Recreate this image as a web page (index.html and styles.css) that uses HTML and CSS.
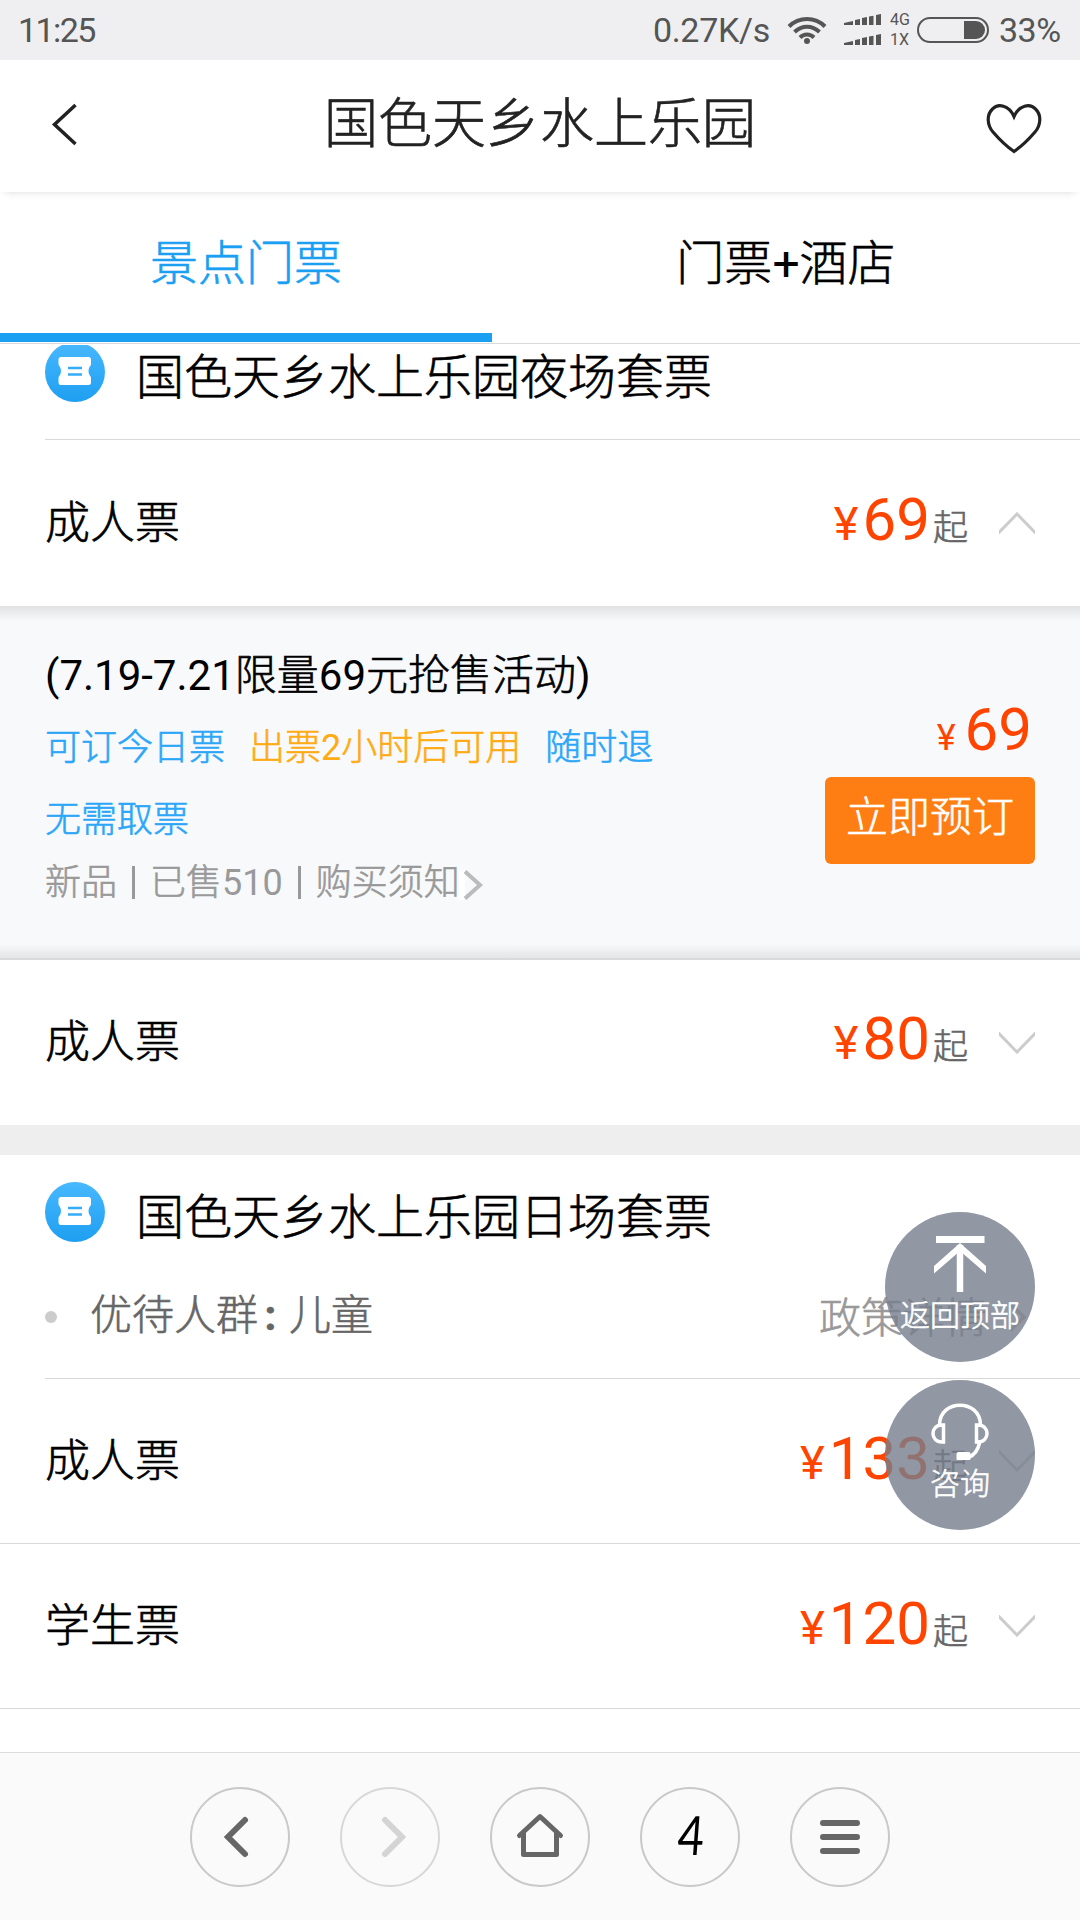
FILE: index.html
```html
<!DOCTYPE html>
<html lang="zh-CN">
<head>
<meta charset="utf-8">
<title>国色天乡水上乐园</title>
<link rel="stylesheet" href="styles.css">
</head>
<body>
<div class="screen">
  <div class="status">
    <span class="clock">11:25</span>
    <span class="speed">0.27K/s</span>
    <svg class="wifi" width="40" height="30" viewBox="0 0 40 30" fill="none" stroke="#555" stroke-width="4">
      <path d="M2 11.500C12 1.500 28 1.500 38 11.500"/>
      <path d="M7.500 17C15 10 25 10 32.500 17"/>
      <path d="M13 22.500C17 18.500 23 18.500 27 22.500"/>
      <circle cx="20" cy="26" r="3" fill="#555" stroke="none"/>
    </svg>
    <svg class="signal" width="38" height="32" viewBox="0 0 38 32" fill="#555">
      <path d="M0 9l9-2v4H0zM11 6l5-1v6h-5zM18 4l5-1v8h-5zM25 2.500l4.500-.7V11H25zM32 1l5-1v11h-5z"/>
      <path d="M0 29l9-2v4H0zM11 26l5-1v6h-5zM18 24l5-1v8h-5zM25 22.500l4.500-.7V31H25zM32 21l5-1v11h-5z"/>
    </svg>
    <span class="net"><span>4G</span><span>1X</span></span>
    <svg class="battery" width="72" height="26" viewBox="0 0 72 26">
      <rect x="1" y="1" width="70" height="24" rx="12" fill="none" stroke="#555" stroke-width="2"/>
      <path d="M47 4h12a9 9 0 0 1 0 18H47z" fill="#555"/>
    </svg>
    <span class="percent">33%</span>
  </div>

  <header class="header">
    <svg width="80" height="60" viewBox="0 0 80 60" fill="none" stroke="#222" stroke-width="3.500"><path d="M39.500 9L18.500 28.500L39.500 48"/></svg>
    <h1 class="title">国色天乡水上乐园</h1>
    <svg class="heart" width="80" height="60" viewBox="0 0 80 60" fill="none" stroke="#222" stroke-width="3.200"><path d="M42 20.500C37 9 26 7 20.500 13C14 19 15.500 30 21 36C27 43 34 50 42 55.500C50 50 57 43 63 36C68.500 30 70 19 63.500 13C58 7 47 9 42 20.500Z"/></svg>
  </header>

  <nav class="tabs">
    <div class="tab tab-active">景点门票</div>
    <div class="tab">门票<span class="num">+</span>酒店</div>
  </nav>

  <main class="list">
    <section class="group group-scrolled">
      <div class="group-head">
        <svg class="ticket" width="60" height="60" viewBox="0 0 60 60">
          <defs><linearGradient id="sky" x1="0" y1="0" x2="0" y2="1"><stop offset="0" stop-color="#48b8fe"/><stop offset="1" stop-color="#1e9ff1"/></linearGradient></defs>
          <circle cx="30" cy="30" r="30" fill="url(#sky)"/>
          <path fill="#fff" d="M16 15h27.500q2.500 0 2.500 2.500V22q0 1.500-1.500 3q-2 4 0 8q1.500 1.500 1.500 3v4.500q0 2.500-2.500 2.500H16q-2.500 0-2.500-2.500V36q0-1.500 1.500-3q2-4 0-8q-1.500-1.500-1.500-3v-4.500Q13.500 15 16 15z"/>
          <path d="M23 26h14M23 32.500h14" stroke="#35acf8" stroke-width="2.500"/>
        </svg>
        <h2 class="group-title">国色天乡水上乐园夜场套票</h2>
      </div>
      <div class="row row-open">
        <span class="kind">成人票</span>
        <span class="price"><i class="yen">¥</i><b class="amount">69</b><small class="from">起</small></span>
        <svg class="arrow" width="36" height="22" viewBox="0 0 36 22" fill="none" stroke="#ccc" stroke-width="3"><path d="M-1 21.500L18 2L37 21.500"/></svg>
      </div>
      <div class="offer">
        <div class="offer-info">
          <h3 class="offer-title">(7.19-7.21<span class="han">限量</span>69<span class="han">元抢售活动</span>)</h3>
          <div class="tags"><span>可订今日票</span><span class="tag-warn">出票<span class="num">2</span>小时后可用</span><span>随时退</span><span>无需取票</span></div>
          <div class="meta"><span>新品</span><i class="bar"></i><span>已售<span class="num">510</span></span><i class="bar"></i><span>购买须知</span><svg class="more" width="24" height="30" viewBox="0 0 24 30"><path fill="#fff" d="M0 0h6v30H0z"/><path d="M6 1.500L21 15L6 28.500" fill="none" stroke="#bbb" stroke-width="4"/></svg></div>
        </div>
        <div class="offer-buy">
          <span class="price"><i class="yen yen-small">¥</i><b class="amount">69</b></span>
          <button class="book">立即预订</button>
        </div>
      </div>
      <div class="row">
        <span class="kind">成人票</span>
        <span class="price"><i class="yen">¥</i><b class="amount">80</b><small class="from">起</small></span>
        <svg class="arrow" width="36" height="22" viewBox="0 0 36 22" fill="none" stroke="#ccc" stroke-width="3"><path d="M-1 .5L18 20L37 .5"/></svg>
      </div>
    </section>

    <section class="group">
      <div class="group-head">
        <svg class="ticket" width="60" height="60" viewBox="0 0 60 60">
          <circle cx="30" cy="30" r="30" fill="url(#sky)"/>
          <path fill="#fff" d="M16 15h27.500q2.500 0 2.500 2.500V22q0 1.500-1.500 3q-2 4 0 8q1.500 1.500 1.500 3v4.500q0 2.500-2.500 2.500H16q-2.500 0-2.500-2.500V36q0-1.500 1.500-3q2-4 0-8q-1.500-1.500-1.500-3v-4.500Q13.500 15 16 15z"/>
          <path d="M23 26h14M23 32.500h14" stroke="#35acf8" stroke-width="2.500"/>
        </svg>
        <h2 class="group-title">国色天乡水上乐园日场套票</h2>
      </div>
      <div class="policy">
        <i class="dot"></i>
        <span class="who">优待人群<span class="colon">:</span>儿童</span>
        <span class="detail">政策详情</span>
        <svg width="18" height="30" viewBox="0 0 18 30" fill="none" stroke="#bbb" stroke-width="3.500"><path d="M1 1.500L15 15L1 28.500"/></svg>
      </div>
      <div class="row row-first">
        <span class="kind">成人票</span>
        <span class="price"><i class="yen">¥</i><b class="amount">133</b><small class="from">起</small></span>
        <svg class="arrow" width="36" height="22" viewBox="0 0 36 22" fill="none" stroke="#ccc" stroke-width="3"><path d="M-1 .5L18 20L37 .5"/></svg>
      </div>
      <div class="row">
        <span class="kind">学生票</span>
        <span class="price"><i class="yen">¥</i><b class="amount">120</b><small class="from">起</small></span>
        <svg class="arrow" width="36" height="22" viewBox="0 0 36 22" fill="none" stroke="#ccc" stroke-width="3"><path d="M-1 .5L18 20L37 .5"/></svg>
      </div>
      <div class="row"></div>
    </section>
  </main>

  <div class="floats">
    <div class="float">
      <svg width="60" height="60" viewBox="0 0 60 60" fill="none" stroke="#fff"><path d="M6 7.500h48.500" stroke-width="7"/><path d="M30 13v47" stroke-width="6.500"/><path d="M4 41.500V34L30 11L56 34V41.500L30 19Z" fill="#fff" stroke="none"/></svg>
      <span>返回顶部</span>
    </div>
    <div class="float">
      <svg width="60" height="60" viewBox="0 0 60 60" fill="none" stroke="#fff" stroke-width="3.500"><path d="M9.500 25C9.500-1.500 50.500-1.500 50.500 25M13.500 25v17h-1.500C0 42 0 25 12 25ZM46.500 25v17h1.500C60 42 60 25 48 25ZM49.500 43Q47 54 39 57"/><rect x="26.500" y="52" width="14" height="8.500" rx="2" fill="#fff" stroke="none"/></svg>
      <span>咨询</span>
    </div>
  </div>

  <footer class="toolbar">
    <div class="tool"><svg viewBox="0 0 100 100" fill="none" stroke="#666" stroke-width="6" stroke-linecap="round"><path d="M55 33L38 50L55 67"/></svg></div>
    <div class="tool tool-off"><svg viewBox="0 0 100 100" fill="none" stroke="#d4d4d4" stroke-width="6" stroke-linecap="round"><path d="M45 33L62 50L45 67"/></svg></div>
    <div class="tool"><svg viewBox="0 0 100 100" fill="none" stroke="#666" stroke-width="5" stroke-linecap="round" stroke-linejoin="round"><path d="M29.500 48.500L50 29.500L70.500 48.500M33.500 46V67.500H66.500V46"/></svg></div>
    <div class="tool"><span class="windows">4</span></div>
    <div class="tool"><svg viewBox="0 0 100 100" fill="none" stroke="#666" stroke-width="6" stroke-linecap="round"><path d="M33 36H67M33 50H67M33 64H67"/></svg></div>
  </footer>
</div>
</body>
</html>
```
FILE: styles.css
```css
* { box-sizing: border-box; margin: 0; padding: 0; }
i, b, small, h1, h2, h3 { font-style: normal; font-weight: inherit; }
svg { display: block; flex: none; }
body {
  width: 1080px;
  height: 1920px;
  overflow: hidden;
  background: #fff;
  color: #000;
  font-family: Roboto, "Noto Sans CJK SC", sans-serif;
  font-weight: 400;
  white-space: nowrap;
}
.screen { position: relative; display: flex; flex-direction: column; width: 1080px; height: 1920px; }
.title, .tab, .group-title, .kind, .from, .han, .tags, .meta, .book, .policy, .float {
  font-weight: 300;
  -webkit-text-stroke: .6px currentColor;
}
.num { font-weight: 400; -webkit-text-stroke: 0; }

.status {
  display: flex;
  flex: none;
  align-items: center;
  height: 60px;
  padding: 0 17px 0 18px;
  background: #efeff1;
  color: #555;
  font-size: 34px;
  line-height: 60px;
}
.clock { letter-spacing: -1.6px; }
.speed { margin-left: auto; letter-spacing: -.3px; }
.wifi { margin-left: 17px; }
.signal { margin-left: 17px; }
.net { display: flex; flex-direction: column; width: 27px; margin-left: 8px; font-size: 16px; line-height: 20px; }
.battery { width: 72px; }
.percent { width: 64px; margin-left: 10px; letter-spacing: -.5px; }

.header {
  position: relative;
  display: grid;
  flex: none;
  grid-template-columns: 1fr auto 1fr;
  align-items: center;
  height: 132px;
  padding: 0 28px 0 36px;
  background: #fff;
  box-shadow: 0 5px 8px -5px rgba(0, 0, 0, .15);
  color: #222;
}
.title { margin: 0 0 3px -8px; font-size: 54px; line-height: 60px; }
.heart { justify-self: end; }

.tabs { display: grid; flex: none; grid-template-columns: 492px 1fr; height: 152px; border-bottom: 1px solid #d9d9d9; }
.tab { padding-top: 42px; font-size: 48px; line-height: 60px; text-align: center; }
.tab-active { height: 150px; border-bottom: 9px solid #1b9ff2; color: #1b9ff2; }

.list { flex: 1; min-height: 0; overflow: hidden; border-top: 1px solid #fff; }
.group + .group { border-top: 30px solid #eee; }
.group-scrolled { margin-top: -30px; }
.group-head { display: flex; align-items: center; height: 114px; padding: 0 0 0 45px; }
.group-scrolled .group-head { height: 124px; padding-bottom: 10px; }
.group-title { margin: 12px 0 0 31px; font-size: 48px; line-height: 60px; }
.row {
  display: flex;
  align-items: center;
  height: 165px;
  padding: 0 45px;
  border-top: 1px solid #d9d9d9;
}
.row-open, .row-first { padding-left: 0; margin-left: 45px; }
.row-open { height: 167px; }
.kind { padding-top: 1px; font-size: 45px; line-height: 60px; }
.price { display: flex; align-items: baseline; margin: 5px 0 0 auto; color: #f40; line-height: 72px; }
.offer + .row { border-top: 0; }
.offer + .row .price { margin-top: 2px; }
.row-open .price { margin-top: 3px; }
.yen { margin-right: 4px; font-size: 47px; }
.amount { font-size: 60px; }
.from { margin-left: 3px; color: #666; font-size: 35px; line-height: 74px; }
.arrow { margin-left: 31px; }

.offer {
  display: flex;
  justify-content: space-between;
  height: 354px;
  padding: 39px 45px 0;
  border-bottom: 2px solid #dadada;
  background:
    linear-gradient(#e1e2e4, #f8f9fb) 0 0 / 100% 15px no-repeat,
    linear-gradient(#f8f9fb, #e4e5e7) 0 100% / 100% 14px no-repeat,
    #f8f9fb;
}
.offer-info { width: 660px; }
.offer-title { font-size: 42px; line-height: 62px; }
.tags { display: flex; flex-wrap: wrap; column-gap: 24px; padding-top: 5px; color: #2ca7f8; font-size: 36px; line-height: 72px; }
.tag-warn { color: #ffab14; }
.meta { display: flex; align-items: center; height: 46px; color: #999; font-size: 36px; }
.bar { width: 3px; height: 33px; margin: 7px 15px 0; background: #999; }
.more { margin: 11px 0 0 -1px; }
.offer-buy { display: flex; flex-direction: column; width: 210px; padding-top: 46px; }
.offer-buy .price { margin: 3px 3px 0 auto; }
.offer-buy .yen { margin-right: 9px; font-size: 36px; }
.book {
  height: 87px;
  margin-top: 3px;
  padding-bottom: 14px;
  border: 0;
  border-radius: 6px;
  background: #ff7e14;
  color: #fff;
  font-family: inherit;
  font-size: 42px;
}

.policy { display: flex; align-items: center; height: 109px; padding: 0 53px 13px 45px; color: #666; font-size: 42px; line-height: 60px; }
.dot { width: 12px; height: 12px; margin-right: 34px; border-radius: 50%; background: #ccc; }
.who { margin: -2px 0 0 -1px; }
.colon { display: inline-block; width: 31px; padding-right: 6px; font-weight: 700; text-align: center; }
.detail { margin: 4px 22px 0 auto; color: #999; }

.floats { position: absolute; top: 1212px; right: 45px; display: grid; gap: 18px; }
.float {
  display: flex;
  flex-direction: column;
  align-items: center;
  width: 150px;
  height: 150px;
  padding-top: 20px;
  border-radius: 50%;
  background: rgba(117, 126, 140, .8);
  color: #fff;
  font-size: 30px;
  line-height: 48px;
}

.toolbar { display: flex; flex: none; justify-content: center; gap: 50px; height: 168px; padding-top: 34px; border-top: 1px solid #ddd; background: #fafafa; }
.tool { position: relative; width: 100px; height: 100px; border: 2px solid #c9c9c9; border-radius: 50%; text-align: center; }
.tool svg { width: 100px; height: 100px; margin: -2px; }
.tool-off { border-color: #d8d8d8; }
.windows { display: block; padding-left: 3px; font-family: Lato, sans-serif; font-size: 54px; line-height: 91px; transform: scaleX(.84) skewX(-5deg); }
```
